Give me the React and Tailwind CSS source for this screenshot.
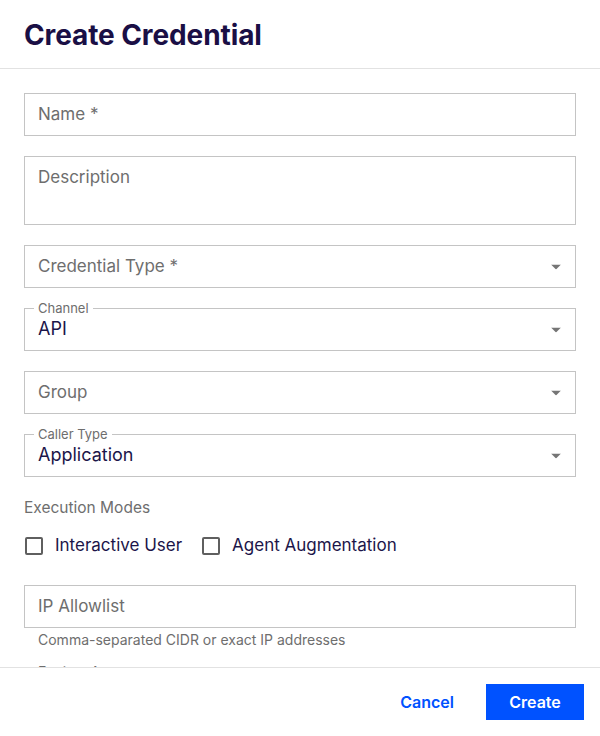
import { useState } from 'react';

const font = { fontFamily: 'Inter, "Noto Sans", sans-serif' };

function Caret() {
  return (
    <svg width="10" height="5" viewBox="0 0 10 5" className="absolute right-[14px] top-1/2 -translate-y-1/2">
      <path d="M0 0h10L5 5z" fill="#757575" />
    </svg>
  );
}

function TextField({ label, tall }) {
  return (
    <div className={`border border-[#c4c4c4] ${tall ? 'h-[69px] pt-[8px]' : 'h-[43px] flex items-center'} px-[13px]`}>
      <span className="text-[17px] text-[#6e6e6e]">{label}</span>
    </div>
  );
}

function SelectField({ label, value }) {
  return (
    <div className="relative border border-[#c4c4c4] h-[43px] flex items-center px-[13px]">
      {value ? (
        <>
          <span className="absolute -top-[9px] left-[9px] bg-white px-[4px] text-[13px] leading-[16px] text-[#6e6e6e]">{label}</span>
          <span className="text-[18px] text-[#1c1549] -mt-[2px]">{value}</span>
        </>
      ) : (
        <span className="text-[17px] text-[#6e6e6e]">{label}</span>
      )}
      <Caret />
    </div>
  );
}

function Check({ label }) {
  const [on, setOn] = useState(false);
  return (
    <label className="flex items-center gap-[12px] cursor-pointer" onClick={() => setOn(!on)}>
      <span className={`w-[18px] h-[18px] border-2 rounded-[2px] ${on ? 'bg-[#0052ff] border-[#0052ff]' : 'border-[#5f5f5f]'}`}></span>
      <span className="text-[17px] text-[#1c1549]">{label}</span>
    </label>
  );
}

export default function App() {
  return (
    <div className="h-[736px] w-[600px] bg-white flex flex-col" style={font}>
      <div className="h-[69px] border-b border-[#e2e2e2] flex items-center px-6 shrink-0">
        <h1 className="text-[28px] font-bold text-[#1a0f45] tracking-[-0.1px] mt-[2px]">Create Credential</h1>
      </div>

      <div className="flex-1 overflow-hidden px-6 pt-6 flex flex-col">
        <div className="flex flex-col gap-[20px]">
          <TextField label="Name *" />
          <TextField label="Description" tall />
          <SelectField label="Credential Type *" />
          <SelectField label="Channel" value="API" />
          <SelectField label="Group" />
          <SelectField label="Caller Type" value="Application" />
        </div>

        <div className="mt-[19px] text-[15.5px] text-[#6e6e6e]">Execution Modes</div>
        <div className="mt-[14px] flex items-center gap-[20px] pl-px">
          <Check label="Interactive User" />
          <Check label="Agent Augmentation" />
        </div>

        <div className="mt-[26px]">
          <TextField label="IP Allowlist" />
          <div className="mt-px px-[14px] text-[14px] text-[#6e6e6e]">Comma-separated CIDR or exact IP addresses</div>
          <div className="mt-[11px] px-[14px] text-[14px] text-[#6e6e6e]">Expires At</div>
        </div>
      </div>

      <div className="h-[69px] border-t border-[#e2e2e2] flex items-center justify-end gap-4 px-4 shrink-0">
        <button className="h-[36px] px-4 text-[16px] font-semibold text-[#0052ff]">Cancel</button>
        <button className="h-[36px] w-[98px] bg-[#0052ff] text-white text-[16px] font-semibold">Create</button>
      </div>
    </div>
  );
}
